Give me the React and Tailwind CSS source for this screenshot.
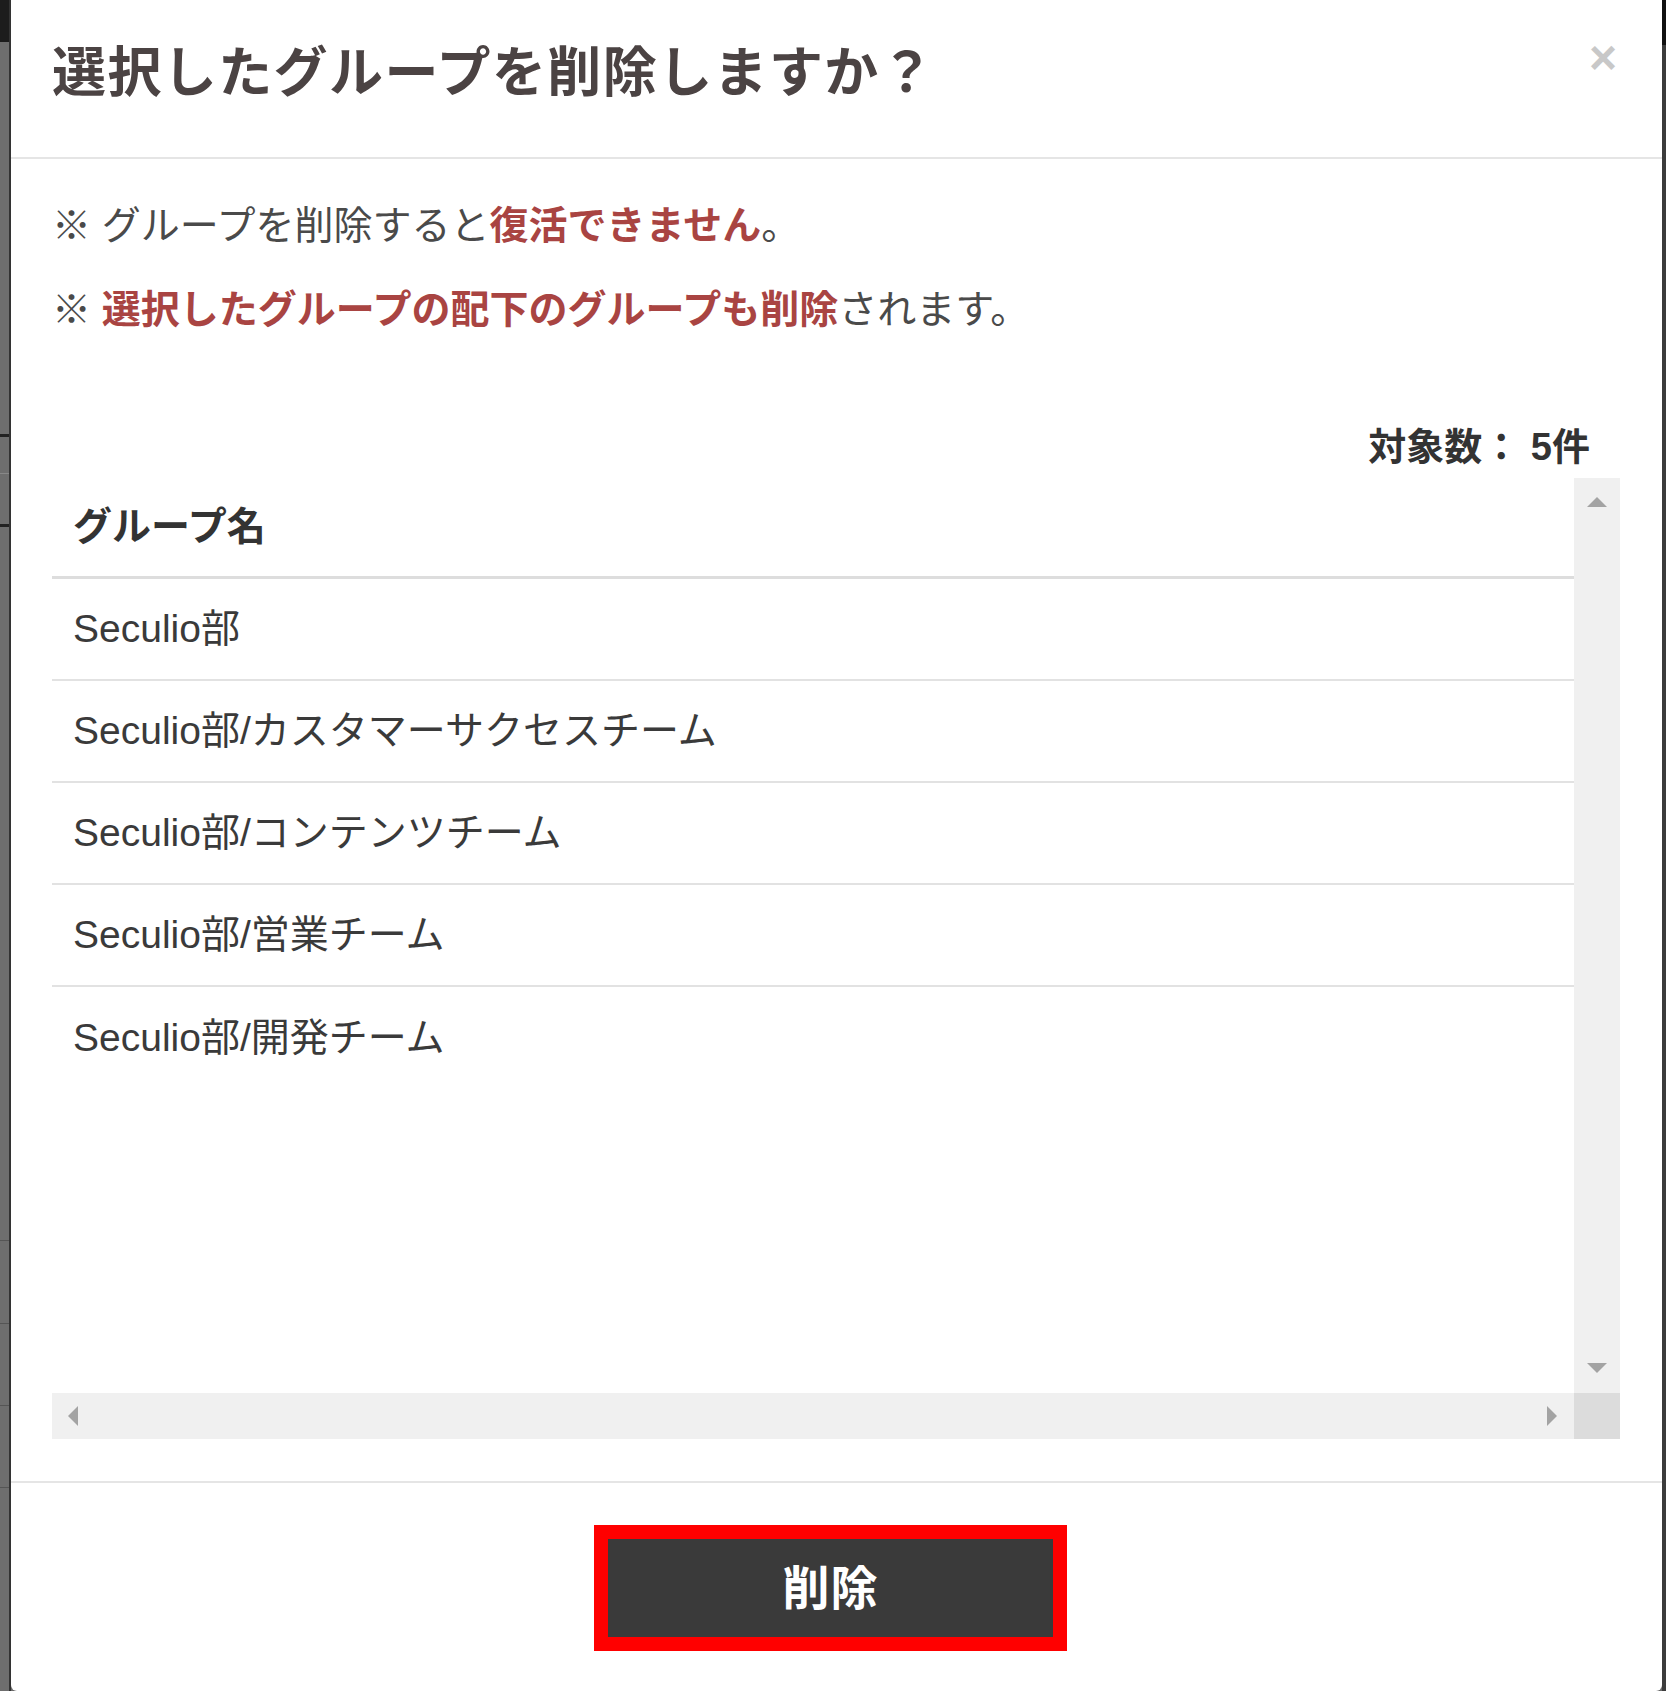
import React from "react";

const rows = [
  "Seculio部",
  "Seculio部/カスタマーサクセスチーム",
  "Seculio部/コンテンツチーム",
  "Seculio部/営業チーム",
  "Seculio部/開発チーム",
];

function Tri({ dir }) {
  const pts = {
    up: "0,10 10,0 20,10",
    down: "0,0 20,0 10,10",
    left: "10,0 10,20 0,10",
    right: "0,0 0,20 10,10",
  }[dir];
  const vertical = dir === "up" || dir === "down";
  return (
    <svg width={vertical ? 20 : 10} height={vertical ? 10 : 20} viewBox={vertical ? "0 0 20 10" : "0 0 10 20"}>
      <polygon points={pts} fill="#a3a3a3" />
    </svg>
  );
}

export default function App() {
  return (
    <div className="flex w-[1666px] h-[1691px] bg-[#6b6b6b] overflow-hidden font-['Liberation_Sans','Noto_Sans_CJK_JP',sans-serif]">
      {/* left backdrop strip */}
      <div className="w-[9px] flex flex-col bg-[#6e6e6e]">
        <div className="h-[42px] bg-[#1c1c1c]" />
        <div className="h-[392px]" />
        <div className="h-[3px] bg-[#222]" />
        <div className="h-[36px]" />
        <div className="h-[1px] bg-[#888]" />
        <div className="h-[50px]" />
        <div className="h-[3px] bg-[#222]" />
        <div className="h-[713px]" />
        <div className="h-[1px] bg-[#555]" />
        <div className="h-[82px]" />
        <div className="h-[1px] bg-[#555]" />
        <div className="h-[81px]" />
        <div className="h-[1px] bg-[#555]" />
        <div className="h-[81px]" />
        <div className="h-[1px] bg-[#555]" />
      </div>
      <div className="w-[2px] bg-[#333]" />

      {/* modal */}
      <div className="flex-1 bg-white flex flex-col rounded-b-[6px]">
        {/* header */}
        <div className="h-[159px] shrink-0 border-b-2 border-[#e5e5e5] flex items-start justify-between pl-[41px] pr-[45px]">
          <h4 className="mt-[46px] text-[54px] leading-none font-bold text-[#4b4343] tracking-[1.4px]">
            選択したグループを削除しますか？
          </h4>
          <span className="mt-[34px] text-[48px] leading-none font-bold text-[#c8c8c8]">×</span>
        </div>

        {/* body */}
        <div className="flex flex-col pl-[41px] pr-[42px] pt-[40px] pb-[42px]">
          <p className="text-[39px] leading-[54px] text-[#4a4a4a]">
            ※ グループを削除すると<span className="font-bold text-[#a94442]">復活できません</span>。
          </p>
          <p className="mt-[30px] text-[39px] leading-[54px] text-[#4a4a4a]">
            ※ <span className="font-bold text-[#a94442]">選択したグループの配下のグループも削除</span>されます。
          </p>
          <div className="mt-[83px] pr-[30px] text-right text-[38px] leading-[54px] font-bold text-[#333]">
            対象数： 5件
          </div>

          {/* table with scrollbars */}
          <div className="mt-[4px] h-[961px] flex flex-col">
            <div className="flex flex-1 min-h-0">
              <div className="flex-1 flex flex-col">
                <div className="h-[101px] shrink-0 border-b-[3px] border-[#dddddd] flex items-center pl-[21px] text-[39px] font-bold text-[#333]">
                  グループ名
                </div>
                {rows.map((r, i) => (
                  <div
                    key={r}
                    className={
                      i < rows.length - 1
                        ? "h-[102px] shrink-0 border-b-2 border-[#e2e2e2] flex items-center pl-[21px] text-[39px] text-[#3a3a3a]"
                        : "h-[102px] shrink-0 flex items-center pl-[21px] text-[39px] text-[#3a3a3a]"
                    }
                  >
                    {r}
                  </div>
                ))}
              </div>
              <div className="w-[46px] shrink-0 bg-[#f0f0f0] flex flex-col items-center justify-between pt-[19px] pb-[20px]">
                <Tri dir="up" />
                <Tri dir="down" />
              </div>
            </div>
            <div className="h-[46px] shrink-0 flex">
              <div className="flex-1 bg-[#f0f0f0] flex items-center justify-between pl-[16px] pr-[17px]">
                <Tri dir="left" />
                <Tri dir="right" />
              </div>
              <div className="w-[46px] bg-[#dcdcdc]" />
            </div>
          </div>
        </div>

        {/* footer */}
        <div className="flex-1 border-t-2 border-[#e5e5e5] flex justify-center pt-[42px] pr-[12px]">
          <div className="w-[473px] h-[126px] border-[14px] border-[#ff0000] bg-[#3a3a3a] flex items-center justify-center">
            <span className="text-[47px] leading-none font-bold text-white tracking-[1px]">削除</span>
          </div>
        </div>
      </div>

      <div className="w-[4px] flex flex-col bg-[#3c3c3c]">
        <div className="h-[45px] bg-[#111]" />
      </div>
    </div>
  );
}
